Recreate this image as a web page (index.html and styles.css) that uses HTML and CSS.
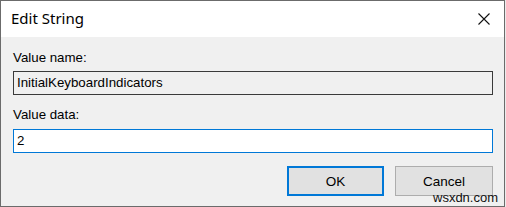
FILE: index.html
```html
<!DOCTYPE html>
<html>
<head>
<meta charset="utf-8">
<link rel="stylesheet" href="styles.css">
</head>
<body>
<div class="window">
  <div class="titlebar">
    <span class="title">Edit String</span>
    <span class="close">
      <svg width="12" height="12" viewBox="0 0 12 12"><path d="M0.5 0.5 L11.5 11.5 M11.5 0.5 L0.5 11.5" stroke="#111" stroke-width="1.1" fill="none"/></svg>
    </span>
  </div>
  <div class="content">
    <div class="label label-name">Value name:</div>
    <div class="field field-name">InitialKeyboardIndicators</div>
    <div class="label label-data">Value data:</div>
    <div class="field field-data">2</div>
    <div class="buttons">
      <div class="btn btn-default">OK</div>
      <div class="btn">Cancel</div>
    </div>
  </div>
  <div class="watermark">wsxdn.com</div>
</div>
</body>
</html>
```
FILE: styles.css
```css
html, body {
  margin: 0;
  padding: 0;
}
body {
  width: 506px;
  height: 207px;
  background: #ececec;
  overflow: hidden;
}
.window {
  position: relative;
  width: 505px;
  height: 207px;
  box-sizing: border-box;
  border: 1px solid #6b6b6b;
  background: #f0f0f0;
  display: flex;
  flex-direction: column;
  font-family: "Liberation Sans", Arial, sans-serif;
  font-size: 13.3px;
  color: #000;
}
.titlebar {
  height: 36px;
  flex: none;
  background: #fff;
  display: flex;
  align-items: center;
  justify-content: space-between;
  padding-left: 10px;
  padding-right: 14px;
}
.title {
  font-family: "Noto Sans", "Open Sans", sans-serif;
  font-size: 15px;
  margin-top: -2px;
}
.close {
  display: flex;
  width: 12px;
  height: 12px;
}
.content {
  flex: 1;
  display: flex;
  flex-direction: column;
  padding: 0 11px 0 12px;
}
.label {
  height: 16px;
  line-height: 16px;
}
.label-name {
  margin-top: 13px;
}
.field {
  height: 24px;
  box-sizing: border-box;
  line-height: 22px;
  padding-left: 3px;
  width: 480px;
}
.field-name {
  margin-top: 5px;
  border: 1px solid #3a3a3a;
  background: #f0f0f0;
}
.label-data {
  margin-top: 12px;
}
.field-data {
  margin-top: 6px;
  border: 1px solid #0078d7;
  background: #fff;
}
.buttons {
  display: flex;
  justify-content: flex-end;
  gap: 11px;
  margin-top: 13px;
}
.btn {
  width: 98px;
  height: 30px;
  box-sizing: border-box;
  border: 1px solid #adadad;
  background: #e1e1e1;
  display: flex;
  align-items: center;
  justify-content: center;
  font-size: 13.5px;
}
.btn-default {
  width: 97px;
  border: 2px solid #0078d7;
}
.watermark {
  position: absolute;
  left: 432px;
  top: 189px;
  font-family: "Liberation Sans", Arial, sans-serif;
  font-size: 13px;
  color: #111;
}
```
